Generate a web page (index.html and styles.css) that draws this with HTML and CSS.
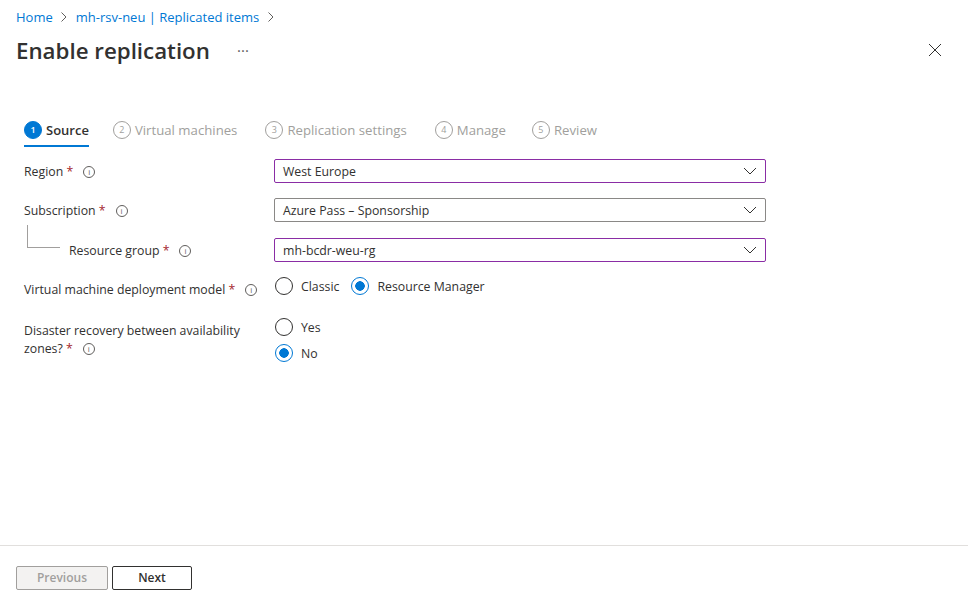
FILE: index.html
```html
<!DOCTYPE html>
<html lang="en">
<head>
    <meta charset="UTF-8">
    <title>Enable replication</title>
    <link rel="stylesheet" href="styles.css">
</head>
<body>
    <div class="page">
        <header class="header">
            <nav class="breadcrumb">
                <a href="#">Home</a>
                <svg class="crumb-sep" width="8" height="12" viewBox="0 0 8 12"><path d="M1.500 1.500 6 6l-4.500 4.500"/></svg>
                <a href="#">mh-rsv-neu | Replicated items</a>
                <svg class="crumb-sep" width="8" height="12" viewBox="0 0 8 12"><path d="M1.500 1.500 6 6l-4.500 4.500"/></svg>
            </nav>
            <div class="title-row">
                <h1>Enable replication</h1>
                <span class="more">···</span>
                <svg class="close" width="14" height="14" viewBox="0 0 14 14"><path d="M1 1l12 12M13 1 1 13"/></svg>
            </div>
        </header>

        <div class="tabs">
            <div class="tab active"><span class="step">1</span>Source</div>
            <div class="tab"><span class="step">2</span>Virtual machines</div>
            <div class="tab"><span class="step">3</span>Replication settings</div>
            <div class="tab"><span class="step">4</span>Manage</div>
            <div class="tab"><span class="step">5</span>Review</div>
        </div>

        <form class="form">
            <div class="row">
                <div class="label">Region <span class="req">*</span><span class="info">i</span></div>
                <div class="select touched">West Europe
                    <svg class="chevron" width="14" height="8" viewBox="0 0 14 8"><path d="M1 1l6 6 6-6"/></svg>
                </div>
            </div>
            <div class="row row-sub">
                <div class="label">Subscription <span class="req">*</span><span class="info">i</span></div>
                <div class="select">Azure Pass – Sponsorship
                    <svg class="chevron" width="14" height="8" viewBox="0 0 14 8"><path d="M1 1l6 6 6-6"/></svg>
                </div>
            </div>
            <div class="row row-group">
                <div class="label-nested">
                    <span class="tree"></span>
                    <div class="label">Resource group <span class="req">*</span><span class="info">i</span></div>
                </div>
                <div class="select touched">mh-bcdr-weu-rg
                    <svg class="chevron" width="14" height="8" viewBox="0 0 14 8"><path d="M1 1l6 6 6-6"/></svg>
                </div>
            </div>
            <div class="row row-model">
                <div class="label label-model">Virtual machine deployment model <span class="req">*</span><span class="info">i</span></div>
                <div class="radios inline">
                    <div class="radio"><span class="dot"></span>Classic</div>
                    <div class="radio on"><span class="dot"></span>Resource Manager</div>
                </div>
            </div>
            <div class="row row-zones">
                <div class="label label-wrap">Disaster recovery between availability<br>zones? <span class="req">*</span><span class="info">i</span></div>
                <div class="radios">
                    <div class="radio"><span class="dot"></span>Yes</div>
                    <div class="radio on"><span class="dot"></span>No</div>
                </div>
            </div>
        </form>

        <footer class="footer">
            <button type="button" class="btn" disabled>Previous</button>
            <button type="button" class="btn btn-next">Next</button>
        </footer>
    </div>
</body>
</html>
```

FILE: styles.css
```css
body {
    margin: 0;
    font-family: "Open Sans", "Noto Sans", sans-serif;
    font-size: 12.3px;
    color: #323130;
    background-color: #fff;
}

.page {
    display: flex;
    flex-direction: column;
    height: 602px;
}

.header {
    padding: 8px 26px 0 16px;
}

.breadcrumb {
    display: flex;
    align-items: center;
    gap: 7.5px;
    height: 18px;
    font-size: 13px;
}

.breadcrumb a {
    color: #0078d4;
    text-decoration: none;
}

.crumb-sep path {
    fill: none;
    stroke: #605e5c;
    stroke-width: 1;
}

.title-row {
    display: flex;
    align-items: center;
    height: 34px;
    margin-top: 7px;
}

h1 {
    margin: 0;
    font-size: 22.3px;
    font-weight: 600;
    width: 221px;
}

.more {
    font-size: 15px;
    line-height: 1;
    color: #605e5c;
}

.close {
    margin-left: auto;
}

.close path {
    fill: none;
    stroke: #323130;
    stroke-width: 1;
}

.tabs {
    display: flex;
    gap: 28px;
    margin: 49px 0 0 24px;
    height: 29px;
}

.tab {
    display: flex;
    align-items: center;
    gap: 4px;
    height: 27px;
    padding-bottom: 2px;
    font-size: 13.2px;
    color: #a19f9d;
    border-bottom: 2px solid transparent;
}

.tab.active {
    margin-right: -4px;
    font-size: 13px;
    color: #323130;
    font-weight: 600;
    border-bottom-color: #0078d4;
}

.tab:last-child {
    margin-left: -2px;
}

.step {
    display: flex;
    align-items: center;
    justify-content: center;
    width: 16px;
    height: 16px;
    border: 1px solid #a19f9d;
    border-radius: 50%;
    font-size: 9px;
    font-weight: 400;
}

.tab.active .step {
    background-color: #0078d4;
    border-color: #0078d4;
    color: #fff;
    font-weight: 600;
}

.form {
    padding-left: 24px;
    margin-top: 14px;
}

.row {
    display: grid;
    grid-template-columns: 250px 492px;
    align-items: center;
}

.row-sub {
    margin-top: 15px;
}

.row-group {
    margin-top: 16px;
}

.row-model {
    margin-top: 15px;
    align-items: start;
}

.row-zones {
    margin-top: 20px;
    align-items: start;
}

.label {
    white-space: nowrap;
}

.label-nested {
    display: flex;
    align-items: center;
    align-self: stretch;
}

.tree {
    align-self: flex-start;
    flex: none;
    width: 33px;
    height: 23px;
    margin: -13px 9px 0 3px;
    border-left: 1px solid #a19f9d;
    border-bottom: 1px solid #a19f9d;
    box-sizing: border-box;
}

.label-model {
    line-height: 17px;
    padding-top: 4px;
}

.label-wrap {
    line-height: 18px;
    padding-top: 4px;
}

.req {
    color: #a4262c;
}

.info {
    display: inline-flex;
    align-items: center;
    justify-content: center;
    width: 10px;
    height: 10px;
    margin-left: 10px;
    border: 1px solid #605e5c;
    border-radius: 50%;
    font-size: 8px;
    line-height: 1;
    color: #605e5c;
    vertical-align: 1px;
}

.select {
    display: flex;
    align-items: center;
    justify-content: space-between;
    height: 24px;
    box-sizing: border-box;
    padding: 0 8px;
    border: 1px solid #8a8886;
    border-radius: 2px;
}

.select.touched {
    border-color: #8a2da5;
}

.chevron path {
    fill: none;
    stroke: #323130;
    stroke-width: 1;
}

.radios {
    display: flex;
    flex-direction: column;
    gap: 8px;
    padding-left: 1px;
}

.radios.inline {
    flex-direction: row;
    gap: 12px;
}

.radio {
    display: flex;
    align-items: center;
    gap: 8px;
    height: 18px;
}

.dot {
    width: 18px;
    height: 18px;
    box-sizing: border-box;
    border: 1px solid #323130;
    border-radius: 50%;
}

.radio.on .dot {
    border-color: #0078d4;
    background: radial-gradient(circle, #0078d4 0 4.5px, #fff 5px);
}

.footer {
    display: flex;
    gap: 4px;
    margin-top: auto;
    height: 57px;
    box-sizing: border-box;
    padding: 20px 0 0 16px;
    border-top: 1px solid #e1dfdd;
}

.btn {
    width: 92px;
    height: 24px;
    padding: 0 0 2px;
    font-family: inherit;
    font-size: 12px;
    font-weight: 600;
    color: #a19f9d;
    background-color: #f3f2f1;
    border: 1px solid #a19f9d;
    border-radius: 2px;
}

.btn-next {
    width: 80px;
    color: #323130;
    background-color: #fff;
    border-color: #323130;
    cursor: pointer;
}
```
